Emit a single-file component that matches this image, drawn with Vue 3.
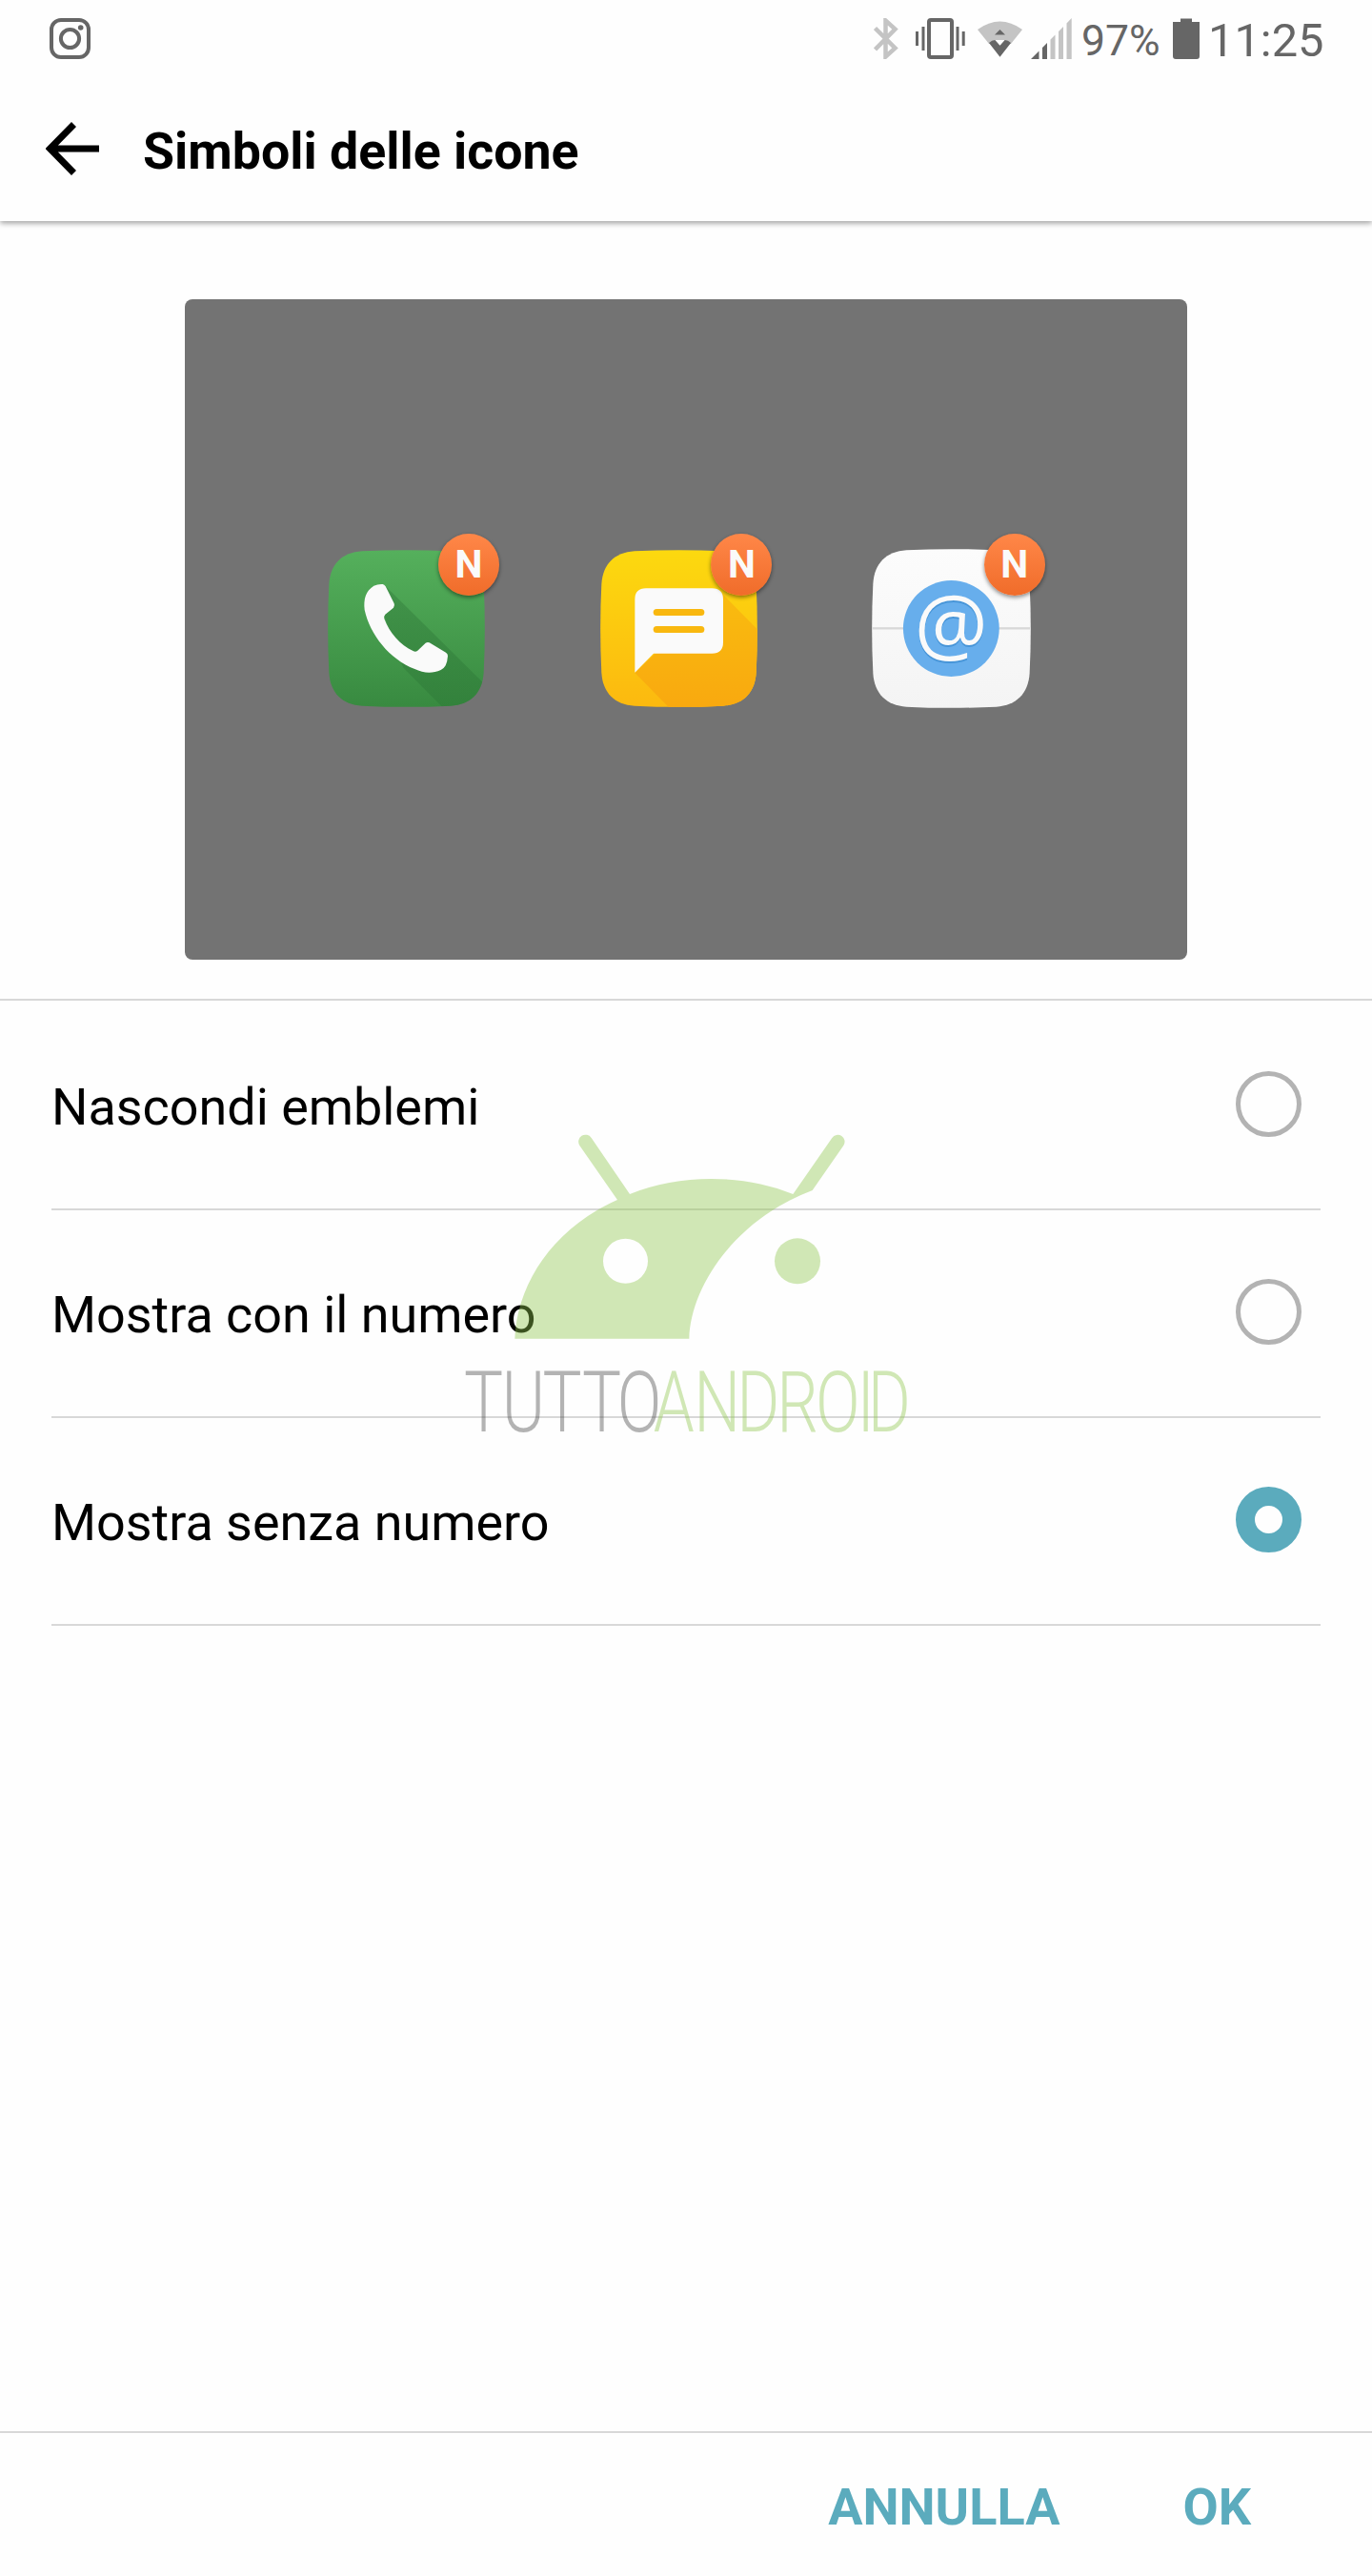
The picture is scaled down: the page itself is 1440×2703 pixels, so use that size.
<template>
  <div class="screen">
    <div class="status-bar">
      <svg class="instagram" viewBox="0 0 43 43">
        <rect x="2" y="2" width="39" height="39" rx="10" />
        <circle cx="21.5" cy="21.5" r="9.6" />
        <circle class="dot" cx="32.7" cy="10" r="2.8" />
      </svg>
      <div class="status-right">
        <svg class="bluetooth" viewBox="0 0 26 43">
          <path d="M1.5 10.5 L22.5 31.5 L12.5 40.5 V2.5 L22.5 11.5 L1.5 33" />
        </svg>
        <svg class="vibrate" viewBox="0 0 52 43">
          <rect class="phone" x="14" y="2" width="24" height="39" rx="2" />
          <path d="M0 14h3v15h-3z M6.5 9h3v25h-3z M42.5 9h3v25h-3z M48.7 14h3v15h-3z" />
        </svg>
        <svg class="wifi" viewBox="0 0 47 38">
          <path class="faint" d="M0 9 Q23.5 -8 47 9 L35 24 H12 Z" />
          <path d="M12 23 Q15 20 18.5 20 L23.5 25.2 L28.5 20 Q32 20 35 23 L23.5 37.7 Z" />
          <path class="gap" d="M18.5 20 H28.5 L23.5 25.7 Z" />
          <path d="M23.5 9 L29 14.5 H18 Z" />
        </svg>
        <svg class="signal" viewBox="0 0 43 43">
          <path d="M0 43 L8.5 34.5 V43 Z M12 31 L17 26 V43 H12 Z" />
          <path class="faint" d="M20.5 22.5 L25.5 17.5 V43 H20.5 Z M29 14 L34 9 V43 H29 Z M37.5 5.5 L42.7 0 V43 H37.5 Z" />
        </svg>
        <span class="percent">97%</span>
        <svg class="battery" viewBox="0 0 28 43">
          <path d="M8 0.5 H20 V4 H28 V40 Q28 43 25 43 H3 Q0 43 0 40 V4 H8 Z" />
        </svg>
        <span class="clock">11:25</span>
      </div>
    </div>

    <header class="header">
      <svg class="back" viewBox="0 0 56 56">
        <path d="M29.5 2.5 L4.5 28 L29.5 53.5 M4.5 28 H56" />
      </svg>
      <h1>Simboli delle icone</h1>
    </header>

    <main class="content">
      <div class="preview-area">
        <div class="preview">
          <div class="app">
            <svg viewBox="72 111 495 495">
              <defs>
                <linearGradient id="phoneBg" x1="0" y1="0" x2="0" y2="1">
                  <stop offset="0" stop-color="#55b05c" />
                  <stop offset="1" stop-color="#388a40" />
                </linearGradient>
                <linearGradient id="phoneShade" x1="0" y1="0" x2="0" y2="1">
                  <stop offset="0" stop-color="#2b7035" stop-opacity="0.35" />
                  <stop offset="1" stop-color="#2b7535" stop-opacity="0.4" />
                </linearGradient>
                <clipPath id="phoneClip"><path :d="tile" transform="translate(72 111)" /></clipPath>
              </defs>
              <path :d="tile" transform="translate(72 111)" fill="url(#phoneBg)" />
              <path d="M253 224 L567 535 V606 H433 L310 482 L250 320 Z" fill="url(#phoneShade)" clip-path="url(#phoneClip)" />
              <path
                d="M217 224 Q230 218 245 219 Q250 220 254 226 L281 280 Q284 287 279 293 L253 314 Q248 319 250 328 C267 373 299 410 342 430 Q349 433 355 428 L380 404 Q386 400 392 403 L444 434 Q450 438 450 445 Q449 462 443 475 Q439 483 428 489 C400 502 373 499 346 486 C266 455 205 378 188 300 C184 265 192 240 217 224 Z"
                fill="#fafafa"
              />
            </svg>
            <span class="badge">N</span>
          </div>

          <div class="app">
            <svg viewBox="91 111 495 495">
              <defs>
                <linearGradient id="smsBg" x1="0" y1="0" x2="0" y2="1">
                  <stop offset="0" stop-color="#fcd90f" />
                  <stop offset="1" stop-color="#fcb90f" />
                </linearGradient>
                <linearGradient id="smsShade" x1="0" y1="0" x2="0" y2="1">
                  <stop offset="0" stop-color="#f9bc0f" />
                  <stop offset="1" stop-color="#f9a80f" />
                </linearGradient>
                <clipPath id="smsClip"><path :d="tile" transform="translate(91 111)" /></clipPath>
              </defs>
              <path :d="tile" transform="translate(91 111)" fill="url(#smsBg)" />
              <path d="M470 244 L600 376 V620 H320 L200 498 Z" fill="url(#smsShade)" clip-path="url(#smsClip)" />
              <path d="M235 232 H443 Q478 232 478 267 V401 Q478 437 443 437 H259 L200 497 V267 Q200 232 235 232 Z" fill="#fafafa" />
              <rect x="258" y="297" width="161" height="21" rx="10.5" fill="#f9b80f" />
              <rect x="258" y="351" width="161" height="21" rx="10.5" fill="#f9b80f" />
            </svg>
            <span class="badge">N</span>
          </div>

          <div class="app mail">
            <svg viewBox="75 108 502 502">
              <defs>
                <linearGradient id="mailBg" x1="0" y1="0" x2="0" y2="1">
                  <stop offset="0" stop-color="#fcfcfc" />
                  <stop offset="1" stop-color="#f4f4f4" />
                </linearGradient>
              </defs>
              <path :d="tile" transform="translate(75 108) scale(1.014)" fill="url(#mailBg)" />
              <rect x="76" y="355" width="499" height="7" fill="#d8d8d8" />
              <circle cx="325.5" cy="359" r="151.5" fill="#67aeec" />
              <text class="at-shade" x="325.5" y="444" text-anchor="middle">@</text>
              <text class="at" x="325.5" y="440" text-anchor="middle">@</text>
            </svg>
            <span class="badge">N</span>
          </div>
        </div>
      </div>

      <ul class="options">
        <li v-for="option in options" :key="option.id" @click="selected = option.id">
          <span>{{ option.label }}</span>
          <i class="radio" :class="{ checked: selected === option.id }"></i>
        </li>
      </ul>
    </main>

    <footer class="actions">
      <button>ANNULLA</button>
      <button>OK</button>
    </footer>

    <svg class="watermark" viewBox="0 0 1500 1110">
      <g fill="#90c84e">
        <path
          fill-rule="evenodd"
          d="M211 734 C218 563 330 387 534 297 L415 126 A21 21 0 0 1 452 102 L573 279 C730 215 930 215 1087 279 L1210 102 A21 21 0 0 1 1246 126 L1148 267 C900 360 764 575 760 734 Z M489 490 a70.5 70.5 0 1 0 141 0 a70.5 70.5 0 1 0 -141 0 Z"
        />
        <circle cx="1101" cy="490" r="72" />
      </g>
      <text class="tutto" transform="translate(0 1025) scale(0.77 1)" x="66 221 388 549 693">TUTTO</text>
      <text class="android" transform="translate(0 1025) scale(0.77 1)" x="841 1006 1182 1345 1504 1673 1717">ANDROID</text>
    </svg>
  </div>
</template>

<script setup>
import { ref } from 'vue'

const selected = ref('dot')

const options = [
  { id: 'hide', label: 'Nascondi emblemi' },
  { id: 'number', label: 'Mostra con il numero' },
  { id: 'dot', label: 'Mostra senza numero' }
]

// rounded tile shared by the app icons
const tile = 'M108 4 Q247 -3 387 4 C450 8 487 45 491 108 Q498 247 491 387 C487 450 450 487 387 491 Q247 498 108 491 C45 487 8 450 4 387 Q-3 247 4 108 C8 45 45 8 108 4 Z'
</script>

<style>
body {
  margin: 0;
  background: #fefefe;
}
</style>

<style scoped>
.screen {
  position: relative;
  display: flex;
  flex-direction: column;
  width: 1440px;
  height: 2703px;
  overflow: hidden;
  background: #fefefe;
  color: #000;
  font-family: Roboto, sans-serif;
}

.status-bar {
  display: flex;
  justify-content: space-between;
  box-sizing: border-box;
  height: 81px;
  padding: 19px 51px 0 52px;
  color: #666;
}

.status-bar svg {
  display: block;
  height: 43px;
  fill: #666;
}

.status-bar .faint {
  fill: #c4c4c4;
}

.status-bar .gap {
  fill: #fefefe;
}

.status-bar .instagram {
  width: 43px;
  fill: none;
  stroke: #666;
  stroke-width: 4;
}

.status-bar .instagram .dot {
  fill: #666;
  stroke: none;
}

.status-right {
  display: flex;
  align-items: flex-start;
}

.status-bar .bluetooth {
  width: 26px;
  margin-right: 18px;
  fill: none;
  stroke: #c4c4c4;
  stroke-width: 4.5;
}

.vibrate {
  width: 52px;
  margin-right: 13px;
}

.vibrate .phone {
  fill: none;
  stroke: #666;
  stroke-width: 4;
}

.status-bar .wifi {
  width: 47px;
  height: 38px;
  margin: 3px 9px 0 0;
}

.signal {
  width: 43px;
  margin-right: 10px;
}

.percent {
  width: 96px;
  font-size: 44.5px;
  line-height: 48px;
}

.battery {
  width: 28px;
  margin-right: 9px;
}

.clock {
  width: 121px;
  font-size: 48.8px;
  line-height: 47px;
}

.header {
  display: flex;
  align-items: center;
  box-sizing: border-box;
  height: 151px;
  padding: 0 48px;
  background: #fefefe;
  box-shadow: 0 2px 6px rgba(0, 0, 0, 0.4);
  /* the shadow only falls below the bar */
  clip-path: inset(0 0 -12px);
}

.back {
  width: 56px;
  height: 56px;
  margin: -2px 46px 0 0;
  fill: none;
  stroke: #000;
  stroke-width: 7;
}

h1 {
  margin: 5px 0 0;
  font-size: 53.7px;
  font-weight: 700;
  line-height: 64px;
  white-space: nowrap;
}

.content {
  flex: 1;
}

.preview-area {
  display: flex;
  justify-content: center;
  box-sizing: border-box;
  height: 818px;
  padding-top: 82px;
  border-bottom: 2px solid #d8d8d8;
}

.preview {
  display: flex;
  align-items: flex-start;
  gap: 121.4px;
  box-sizing: border-box;
  width: 1052px;
  height: 693px;
  padding: 263px 0 0 150px;
  border-radius: 8px;
  background: #737373;
}

.app {
  position: relative;
  width: 165px;
  height: 165px;
}

.app svg {
  display: block;
  width: 165px;
  height: 165px;
}

.app.mail svg {
  width: 167px;
  height: 167px;
  margin: -1px 0 0 -1.5px;
}

.badge {
  position: absolute;
  top: -17px;
  left: 116px;
  width: 64px;
  height: 65px;
  border-radius: 50%;
  background: linear-gradient(#ff8748, #f06c2a);
  box-shadow: 0 2px 4px rgba(0, 0, 0, 0.45);
  color: #fafafa;
  font-size: 41px;
  font-weight: 700;
  line-height: 65px;
  text-align: center;
}

.at,
.at-shade {
  font-family: "Open Sans", sans-serif;
  font-size: 258px;
  fill: #fafafa;
}

.at-shade {
  fill: #4795d8;
}

.options {
  margin: 0;
  padding: 2px 54px 0;
  list-style: none;
}

.options li {
  display: flex;
  align-items: center;
  justify-content: space-between;
  box-sizing: border-box;
  height: 218px;
  padding: 0 20px 0 0;
  border-bottom: 2px solid #d8d8d8;
  font-size: 53.9px;
  line-height: 64px;
}

.options li span {
  padding-top: 3px;
}

.radio {
  box-sizing: border-box;
  width: 69px;
  height: 69px;
  margin-top: -3px;
  border: 5.5px solid #b3b3b3;
  border-radius: 50%;
}

.radio.checked {
  border: 20px solid #5babbd;
}

.actions {
  display: flex;
  justify-content: flex-end;
  gap: 129px;
  box-sizing: border-box;
  height: 152px;
  padding: 46px 127px 0 0;
  border-top: 2px solid #d8d8d8;
}

.actions button {
  height: 64px;
  padding: 0;
  border: none;
  background: none;
  color: #5babbd;
  font-family: inherit;
  font-size: 54px;
  font-weight: 700;
  line-height: 64px;
}

.watermark {
  position: absolute;
  top: 1160px;
  left: 470px;
  width: 500px;
  height: 370px;
  opacity: 0.41;
  pointer-events: none;
}

.tutto,
.android {
  font-size: 268px;
  font-weight: 300;
  fill: #494949;
}

.android {
  fill: #90c84e;
}
</style>
